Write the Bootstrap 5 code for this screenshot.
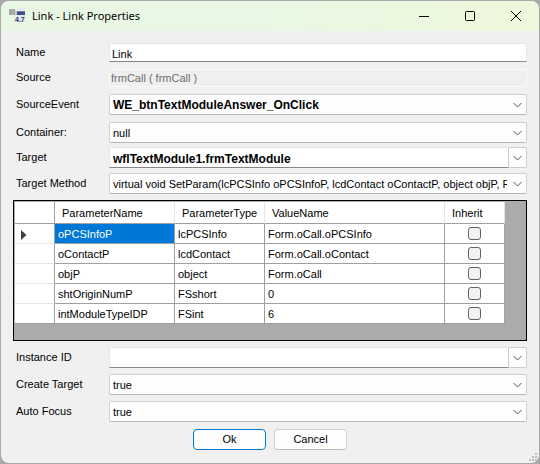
<!DOCTYPE html>
<html lang="en">
<head>
<meta charset="utf-8">
<meta name="viewport" content="width=device-width, initial-scale=1">
<title>Link - Link Properties</title>
<link href="https://cdn.jsdelivr.net/npm/bootstrap@5.3.0/dist/css/bootstrap.min.css" rel="stylesheet">
<style>
  body { background: #a9a9a9; color: #000; font-family: "Liberation Sans", Arial, sans-serif; font-size: 11px; line-height: 13px; padding: 1px 1px 1px; }
  .dialog-window { background: #f0f0f0; border-radius: 8px; overflow: hidden; }
  .title-bar { height: 30px; background: linear-gradient(90deg, #e9f8e4 50%, #eef8dc); padding-left: 8px; }
  .title-text { font: 11px/16px "Noto Sans", "Open Sans", sans-serif; margin-left: 6px; }
  .caption-btn { width: 46px; height: 30px; border: 0; background: transparent; padding: 0; }
  .dialog-body { padding: 12px 12px 13px 15px; }
  .stack-top { gap: 7px; margin-bottom: 4px; }
  .stack-mid { gap: 5px; margin-bottom: 6px; }
  .stack-end { gap: 6px; margin-bottom: 7px; }
  .field-label { width: 93px; flex: none; margin-bottom: 1px; }
  .field { font-size: 11px; line-height: 13px; color: #000; border-radius: 1px; height: 21px; min-height: 0; padding: 3px 3px 1px; min-width: 0; box-shadow: none; }
  .text-field { border: 1px solid #e6e6e6; border-bottom-color: #868686; background: #fff; }
  .name-field { height: 19px; padding-left: 2px; }
  .field.source-field:disabled { height: 18px; padding: 0 1px; border: 1px solid #fafafa; background: #efefef; color: #6d6d6d; }
  .drop-field { border: 1px solid #d0d0d0; border-bottom-color: #b8b8b8; border-radius: 2px; padding-right: 19px; background-color: #fdfdfd; background-size: 9px 6px; background-position: right 4px center;
    background-image: url("data:image/svg+xml,%3Csvg xmlns='http://www.w3.org/2000/svg' viewBox='0 0 9 6'%3E%3Cpath d='M.5 1l4 4 4-4' fill='none' stroke='%23555'/%3E%3C/svg%3E"); }
  .strong-field { font-size: 12px; font-weight: bold; }
  .drop-btn { width: 19px; height: 21px; padding: 0; border: 1px solid #ccc; border-radius: 0 2px 2px 0; background: #fdfdfd; line-height: 1; }
  .grid-panel { border: 1px solid #000; background: #ababab; padding: 1px 1px 16px; margin: 0 0 6px -3px; }
  .param-grid { table-layout: fixed; width: 490px; border-collapse: separate; border-spacing: 0; background: #fff; }
  .param-grid th, .param-grid td { font-weight: normal; text-align: left; vertical-align: middle; white-space: nowrap; padding: 2px 3px 0; height: 20px; border: solid #a0a0a0; border-width: 0 1px 1px 0; }
  .param-grid thead th { height: 22px; padding: 1px 7px 0; border-right-color: #e5e5e5; }
  .param-grid tbody th { border-bottom-color: #e5e5e5; padding-left: 6px; }
  .param-grid thead th:first-child { border-right-color: #a0a0a0; }
  .param-grid tr:last-child th, .param-grid thead th { border-bottom-color: #a0a0a0; }
  .param-grid .picked { background: #0078d7; color: #fff; }
  .param-grid .tick-cell { text-align: center; padding-top: 0; }
  .tick { appearance: none; width: 13px; height: 13px; border: 1px solid #626262; border-radius: 3px; background: #f3f3f3; }
  .action-row { padding-right: 3px; }
  .action-btn { width: 73px; height: 21px; font-size: 11px; line-height: 13px; padding: 0; border: 1px solid #d0d0d0; border-bottom-color: #bcbcbc; border-radius: 4px; background: #fdfdfd; color: #000; }
  .action-btn.default-btn { border-color: #0078d4; }
  .size-grip { position: absolute; right: 2px; bottom: 2px; }
</style>
</head>
<body>
<main class="dialog-window position-relative">
  <header class="title-bar d-flex align-items-center">
    <svg width="17" height="16" viewBox="0 0 17 16" aria-hidden="true">
      <path fill="#aaa" d="M0 1h6v6H0z"/><path fill="#c9c9c9" d="M6 3h3v4H6z"/><path fill="#e8e8ec" d="M8 0h8v4H8zM5 7h11v7H5z"/>
      <path fill="#414d86" d="M8 3h8v4H8z"/><path fill="#777ea6" d="M8 3h8v1H8z"/>
      <text x="6" y="14" font-family="Liberation Sans" font-size="7" font-weight="bold" fill="#2b3977">4.7</text>
    </svg>
    <h1 class="title-text mb-0 me-auto">Link - Link Properties</h1>
    <button class="caption-btn" aria-label="Minimize"><svg class="d-block mx-auto" width="10" height="10"><path d="M0 5.5h10" stroke="#000"/></svg></button>
    <button class="caption-btn" aria-label="Maximize"><svg class="d-block mx-auto" width="10" height="10"><rect x=".5" y=".5" width="9" height="9" rx="1" fill="none" stroke="#000"/></svg></button>
    <button class="caption-btn" aria-label="Close"><svg class="d-block mx-auto" width="10" height="10"><path d="M0 0l10 10M10 0L0 10" stroke="#000"/></svg></button>
  </header>

  <form class="dialog-body">
    <div class="stack-top d-flex flex-column">
      <div class="d-flex align-items-center"><label class="field-label" for="name">Name</label><input class="form-control field text-field name-field" id="name" value="Link"></div>
      <div class="d-flex align-items-center"><label class="field-label" for="source">Source</label><input class="form-control field source-field" id="source" value="frmCall ( frmCall )" disabled></div>
      <div class="d-flex align-items-center"><label class="field-label" for="event">SourceEvent</label><select class="form-select field drop-field strong-field" id="event"><option>WE_btnTextModuleAnswer_OnClick</option></select></div>
      <div class="d-flex align-items-center"><label class="field-label" for="container">Container:</label><select class="form-select field drop-field" id="container"><option>null</option></select></div>
    </div>
    <div class="stack-mid d-flex flex-column">
      <div class="d-flex align-items-center"><label class="field-label" for="target">Target</label>
        <div class="input-group flex-nowrap"><input class="form-control field text-field strong-field" id="target" value="wflTextModule1.frmTextModule"><button type="button" class="btn drop-btn" aria-label="Choose target"><svg width="9" height="6"><path d="M.5 1l4 4 4-4" fill="none" stroke="#555"/></svg></button></div></div>
      <div class="d-flex align-items-center"><label class="field-label" for="method">Target Method</label><select class="form-select field drop-field" id="method"><option>virtual void SetParam(lcPCSInfo oPCSInfoP, lcdContact oContactP, object objP, FS</option></select></div>
    </div>

    <div class="grid-panel">
      <table class="param-grid">
        <colgroup><col style="width:40px"><col style="width:120px"><col style="width:90px"><col style="width:180px"><col style="width:60px"></colgroup>
        <thead><tr><th></th><th>ParameterName</th><th>ParameterType</th><th>ValueName</th><th>Inherit</th></tr></thead>
        <tbody>
          <tr><th><svg class="d-block" width="6" height="10"><path d="M0 0l5.500 5L0 10z" fill="#404040"/></svg></th><td class="picked">oPCSInfoP</td><td>lcPCSInfo</td><td>Form.oCall.oPCSInfo</td><td class="tick-cell"><input class="tick d-block mx-auto" type="checkbox" aria-label="Inherit oPCSInfoP"></td></tr>
          <tr><th></th><td>oContactP</td><td>lcdContact</td><td>Form.oCall.oContact</td><td class="tick-cell"><input class="tick d-block mx-auto" type="checkbox" aria-label="Inherit oContactP"></td></tr>
          <tr><th></th><td>objP</td><td>object</td><td>Form.oCall</td><td class="tick-cell"><input class="tick d-block mx-auto" type="checkbox" aria-label="Inherit objP"></td></tr>
          <tr><th></th><td>shtOriginNumP</td><td>FSshort</td><td>0</td><td class="tick-cell"><input class="tick d-block mx-auto" type="checkbox" aria-label="Inherit shtOriginNumP"></td></tr>
          <tr><th></th><td>intModuleTypeIDP</td><td>FSint</td><td>6</td><td class="tick-cell"><input class="tick d-block mx-auto" type="checkbox" aria-label="Inherit intModuleTypeIDP"></td></tr>
        </tbody>
      </table>
    </div>

    <div class="stack-end d-flex flex-column">
      <div class="d-flex align-items-center"><label class="field-label" for="instance">Instance ID</label>
        <div class="input-group flex-nowrap"><input class="form-control field text-field" id="instance"><button type="button" class="btn drop-btn" aria-label="Choose instance"><svg width="9" height="6"><path d="M.5 1l4 4 4-4" fill="none" stroke="#555"/></svg></button></div></div>
      <div class="d-flex align-items-center"><label class="field-label" for="create">Create Target</label><select class="form-select field drop-field" id="create"><option>true</option><option>false</option></select></div>
      <div class="d-flex align-items-center"><label class="field-label" for="focus">Auto Focus</label><select class="form-select field drop-field" id="focus"><option>true</option><option>false</option></select></div>
    </div>
    <div class="action-row d-flex justify-content-center gap-2">
      <button type="submit" class="btn action-btn default-btn">Ok</button>
      <button type="button" class="btn action-btn">Cancel</button>
    </div>
  </form>
  <svg class="size-grip" width="8" height="8" aria-hidden="true"><path fill="#bdbdbd" d="M6 0h2v2H6zM3 3h2v2H3zM6 3h2v2H6zM0 6h2v2H0zM3 6h2v2H3zM6 6h2v2H6z"/></svg>
</main>
<script src="https://cdn.jsdelivr.net/npm/bootstrap@5.3.0/dist/js/bootstrap.bundle.min.js"></script>
</body>
</html>
